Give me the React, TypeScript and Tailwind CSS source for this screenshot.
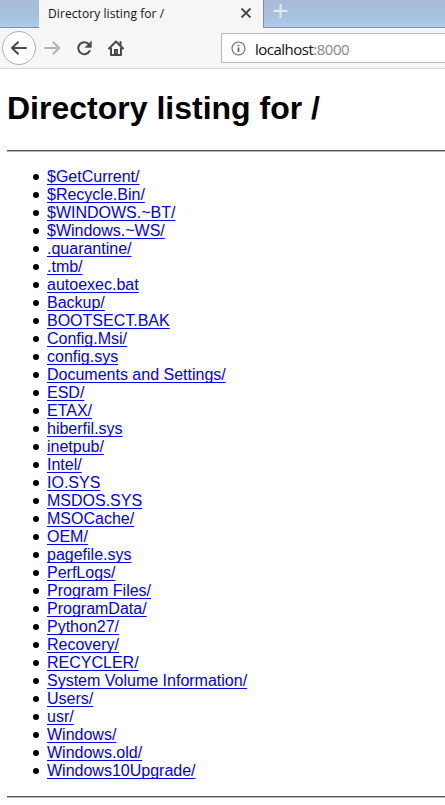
const entries = [
  '$GetCurrent/', '$Recycle.Bin/', '$WINDOWS.~BT/', '$Windows.~WS/', '.quarantine/', '.tmb/',
  'autoexec.bat', 'Backup/', 'BOOTSECT.BAK', 'Config.Msi/', 'config.sys', 'Documents and Settings/',
  'ESD/', 'ETAX/', 'hiberfil.sys', 'inetpub/', 'Intel/', 'IO.SYS', 'MSDOS.SYS', 'MSOCache/', 'OEM/',
  'pagefile.sys', 'PerfLogs/', 'Program Files/', 'ProgramData/', 'Python27/', 'Recovery/', 'RECYCLER/',
  'System Volume Information/', 'Users/', 'usr/', 'Windows/', 'Windows.old/', 'Windows10Upgrade/',
];

const sky = 'bg-linear-to-b from-[#a9bbd8] via-[#a6bfdd] to-[#b0cce8] border-b border-[#7394b0]';

function TabStrip() {
  return (
    <div className="flex h-7">
      <div className={`w-[39px] ${sky}`} />
      <div className="flex w-[224px] items-center justify-between bg-[#f6f6f6] pl-[9px] pr-[11px]">
        <span className="whitespace-nowrap pb-px text-[12px] leading-4 tracking-[0.08px] text-[#111]">
          Directory listing for /
        </span>
        <svg width="12" height="12" viewBox="0 0 12 12" className="mb-[2px]" fill="none" stroke="#4a4a4a" strokeWidth="1.8">
          <path d="M1.5 1.5l9 9M10.5 1.5l-9 9" />
        </svg>
      </div>
      <div className={`flex-1 border-l border-l-[#7394b0] pl-[9px] pt-[3px] ${sky}`}>
        <svg width="15" height="15" viewBox="0 0 15 15" stroke="#e3edf7" strokeWidth="2">
          <path d="M7.5 1v14M.5 8h14" />
        </svg>
      </div>
    </div>
  );
}

function Toolbar() {
  return (
    <div className="flex h-[41px] items-start border-b border-[#d7dcd7] bg-[#f6f6f6]">
      <svg width="125" height="40" viewBox="0 28 125 40" fill="none" strokeLinecap="round" strokeLinejoin="round">
        <circle cx="19" cy="48" r="16.5" fill="#fff" stroke="#b1b1b1" />
        <path d="M26 48H12.5M18 42.2L12 48l6 5.8" stroke="#484848" strokeWidth="2" />
        <path d="M45 48h13.5M53.3 42.2l6 5.8-6 5.8" stroke="#b3b3b3" strokeWidth="2" />
        <path d="M89 44.4A6 6 0 1 0 89.6 51" stroke="#484848" strokeWidth="2" />
        <path d="M91.4 41.2v6.2h-6.2z" fill="#484848" stroke="#484848" strokeWidth=".5" />
        <path d="M109 48.5l7-7 7 7M111 48.5V55h10v-6.5" stroke="#484848" strokeWidth="2" />
        <path d="M120.5 42v3" stroke="#484848" strokeWidth="2" />
        <path d="M114 55v-6h4v6z" fill="#484848" />
        <path d="M116.5 51.8v.4" stroke="#ddd" strokeWidth=".8" />
      </svg>
      <div className="ml-24 mt-[5px] flex h-[30px] flex-1 items-center rounded-l-[2px] border border-r-0 border-[#b8b8b8] bg-white pl-[9px]">
        <svg width="15" height="15" viewBox="0 0 15 15" fill="none" stroke="#666">
          <circle cx="7.5" cy="7.5" r="6.5" strokeWidth="1.1" />
          <path d="M7.5 6.5V11M7.5 3.8v1.5" strokeWidth="1.8" />
        </svg>
        <span className="ml-[9px] whitespace-nowrap pt-px text-[15px] leading-5 tracking-[-0.5px] text-[#111]">
          localhost<span className="text-[#888]">:8000</span>
        </span>
      </div>
    </div>
  );
}

export default function App() {
  return (
    <div className="h-[805px] w-[445px] overflow-hidden bg-white">
      <header className="font-['Open_Sans','Noto_Sans',sans-serif]">
        <TabStrip />
        <Toolbar />
      </header>
      <main className="pl-[7px] font-['Liberation_Sans',Arial,sans-serif] text-black">
        <h1 className="pt-[21px] text-[32px] leading-9 font-bold">Directory listing for /</h1>
        <hr className="mt-6 h-[2px] border-t border-b border-t-[#555] border-b-[#b5b5b5]" />
        <ul className="mt-4 pl-[26px] text-[16px] leading-[18px]">
          {entries.map((name) => (
            <li
              key={name}
              className="flex h-[18px] items-center before:mr-2 before:size-[6px] before:rounded-full before:bg-black before:content-['']"
            >
              <a href="#" className="text-[#0000ee] underline decoration-1 underline-offset-2 [text-decoration-skip-ink:none]">{name}</a>
            </li>
          ))}
        </ul>
        <hr className="mt-4 h-[2px] border-t border-b border-t-[#555] border-b-[#b5b5b5]" />
      </main>
    </div>
  );
}
